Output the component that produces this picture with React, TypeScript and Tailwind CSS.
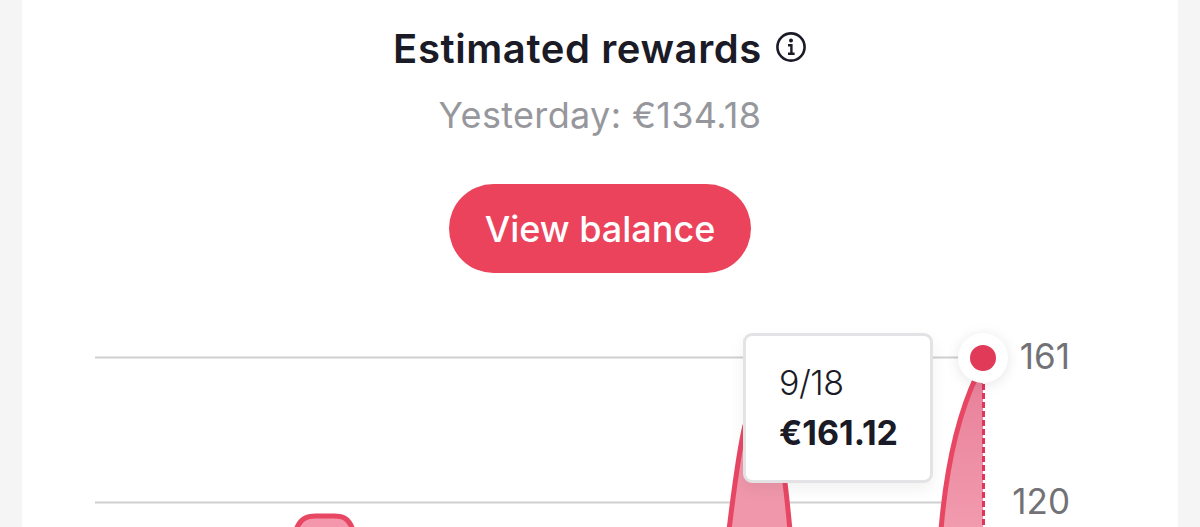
const font = { fontFamily: "Inter, 'Noto Sans', sans-serif" };

function InfoIcon() {
  return (
    <svg width="32" height="32" viewBox="0 0 32 32" fill="none" className="ml-[13px] mt-[-4px]">
      <circle cx="16" cy="16" r="13.6" stroke="#1a1b26" strokeWidth="2.6" />
      <circle cx="16" cy="9.6" r="2" fill="#1a1b26" />
      <path d="M13 14.2h3.4v8.4M13 22.8h6.6" stroke="#1a1b26" strokeWidth="2.4" />
    </svg>
  );
}

function Chart() {
  return (
    <svg width="1156" height="211" viewBox="22 316 1156 211" className="block">
      <defs>
        <linearGradient id="area" x1="0" y1="0" x2="0" y2="1">
          <stop offset="0" stopColor="#e8809a" />
          <stop offset="1" stopColor="#f29bae" />
        </linearGradient>
      </defs>
      <path d="M95 357.5H960M95 502.5H985" stroke="#cfcfd1" strokeWidth="2" />
      <path d="M296 530C300 519 306 516 316 516H334C344 516 349 519 353 530Z" fill="#f497ac" stroke="#e84764" strokeWidth="5" />
      <path d="M729 530C734 490 738 455 745 425L780 450C785 475 787 500 790 530Z" fill="#f097ab" />
      <path d="M729 530C734 490 738 455 745 425M780 450C785 475 787 500 790 530" fill="none" stroke="#e84764" strokeWidth="5" />
      <path d="M941 530C946 470 958 415 977 375L983 375V530Z" fill="url(#area)" />
      <path d="M941 530C946 470 958 415 977 375" fill="none" stroke="#e84764" strokeWidth="5" />
      <path d="M983.5 375V527" stroke="#e0355a" strokeWidth="3" strokeDasharray="6 3" />
      <text x="1070" y="369" textAnchor="end" fontSize="35" fill="#727276" style={font}>161</text>
      <text x="1070" y="514" textAnchor="end" fontSize="35" fill="#727276" style={font}>120</text>
    </svg>
  );
}

export default function App() {
  return (
    <div className="h-[527px] w-[1200px] overflow-hidden bg-[#f5f5f5] px-[22px]" style={font}>
      <div className="relative flex h-full flex-col items-center bg-white">
        <div className="mt-[26px] flex items-center text-[40px] leading-[46px] font-semibold tracking-[0.6px] text-[#1a1b26]">
          Estimated rewards
          <InfoIcon />
        </div>
        <p className="mt-[21px] text-[36px] leading-[44px] tracking-[0.35px] text-[#96979c]">Yesterday: €134.18</p>
        <button className="mt-[47px] h-[90px] w-[302px] rounded-full bg-[#ec435c] text-[36px] font-medium text-white">
          View balance
        </button>
        <div className="mt-[43px]">
          <Chart />
        </div>
        <div className="absolute top-[333px] left-[721px] h-[150px] w-[190px] rounded-[9px] border-[3px] border-[#e3e3e5] bg-white pt-[25px] pl-[33px] shadow-[0_6px_16px_rgba(0,0,0,0.06)]">
          <div className="text-[34px] leading-[44px] font-light tracking-[-0.5px] text-[#1a1b26]">9/18</div>
          <div className="mt-[6px] text-[34px] leading-[44px] font-bold text-[#1a1b26]">€161.12</div>
        </div>
        <div className="absolute top-[333px] left-[936px] flex h-[50px] w-[50px] items-center justify-center rounded-full bg-white shadow-[0_2px_14px_rgba(0,0,0,0.1)]">
          <div className="h-[26px] w-[26px] rounded-full bg-[#e13a58]" />
        </div>
      </div>
    </div>
  );
}
